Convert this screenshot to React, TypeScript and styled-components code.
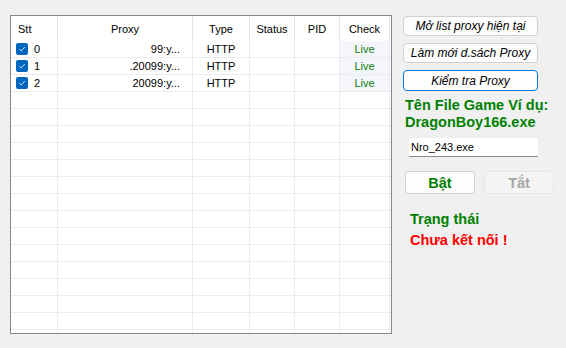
import styled, { createGlobalStyle } from "styled-components";

const GlobalStyle = createGlobalStyle`
    html, body {
        margin: 0;
        padding: 0;
        background: #f0f0f0;
        font-family: "Liberation Sans", Arial, sans-serif;
    }
`;

const Window = styled.div`
    width: 566px;
    height: 348px;
    display: flex;
    align-items: flex-start;
    background: #f0f0f0;
    overflow: hidden;
`;

const Grid = styled.div`
    margin: 15px 0 0 10px;
    width: 382px;
    height: 319px;
    box-sizing: border-box;
    border: 1px solid #828790;
    background: #ffffff;
    overflow: hidden;
    font-size: 11px;
    color: #000;
`;

const cols = "47px 135px 57px 45px 45px 50px";

const HeaderRow = styled.div`
    display: grid;
    grid-template-columns: ${cols};
    height: 25px;
`;

const HeaderCell = styled.div<{ $align?: string }>`
    display: flex;
    align-items: center;
    justify-content: ${(p) => p.$align || "center"};
    padding-left: ${(p) => (p.$align === "flex-start" ? "7px" : "0")};
    border-right: 1px solid #e5e5e5;
`;

const Row = styled.div`
    display: grid;
    grid-template-columns: ${cols};
    height: 17px;
    box-sizing: border-box;
    border-bottom: 1px solid #ececec;
`;

const Cell = styled.div<{ $align?: string; $tint?: boolean }>`
    display: flex;
    align-items: center;
    justify-content: ${(p) => p.$align || "center"};
    border-right: 1px solid #ececec;
    background: ${(p) => (p.$tint ? "#f4f6fb" : "#fff")};
    white-space: nowrap;
`;

const SttCell = styled(Cell)`
    justify-content: flex-start;
    padding-left: 5px;
    gap: 6px;
`;

const Box = styled.span`
    width: 12px;
    height: 12px;
    border-radius: 2px;
    background: #0067c0;
    display: flex;
    align-items: center;
    justify-content: center;
`;

const ProxyCell = styled(Cell)`
    justify-content: flex-end;
    padding-right: 12px;
`;

const Live = styled.span`
    color: #0b7d0b;
`;

const Panel = styled.div`
    margin: 16px 0 0 11px;
    width: 152px;
    display: flex;
    flex-direction: column;
`;

const ActionButton = styled.button<{ $focus?: boolean }>`
    width: 135px;
    height: ${(p) => (p.$focus ? "21px" : "20px")};
    margin-bottom: 7px;
    padding: 0;
    border: 1px solid ${(p) => (p.$focus ? "#0078d4" : "#d0d0d0")};
    border-radius: 4px;
    background: #fdfdfd;
    font-family: "Liberation Sans", Arial, sans-serif;
    font-size: 12px;
    font-style: italic;
    color: #000;
`;

const Label = styled.div<{ $color?: string; $indent?: number }>`
    font-size: 14.5px;
    font-weight: bold;
    line-height: 17px;
    color: ${(p) => p.$color || "#008000"};
    padding-left: ${(p) => p.$indent || 0}px;
`;

const Hint = styled(Label)`
    margin-top: -1px;
`;

const FileInput = styled.input`
    margin: 7px 0 0 6px;
    width: 129px;
    height: 19px;
    box-sizing: border-box;
    border: none;
    border-bottom: 1px solid #8c8c8c;
    padding: 0 2px;
    background: #fff;
    font-family: "Liberation Sans", Arial, sans-serif;
    font-size: 11px;
    color: #000;
    outline: none;
`;

const ToggleRow = styled.div`
    display: flex;
    gap: 9px;
    margin: 14px 0 0 2px;
`;

const Toggle = styled.button<{ $off?: boolean }>`
    width: 70px;
    height: 23px;
    padding: 0;
    border: 1px solid ${(p) => (p.$off ? "#e6e6e6" : "#d0d0d0")};
    border-radius: 4px;
    background: ${(p) => (p.$off ? "#f4f4f4" : "#fdfdfd")};
    font-family: "Liberation Sans", Arial, sans-serif;
    font-size: 14.5px;
    font-weight: bold;
    color: ${(p) => (p.$off ? "#a6a6a6" : "#008000")};
`;

const Status = styled.div`
    margin-top: 17px;
    display: flex;
    flex-direction: column;
    gap: 4px;
`;

const rows = [
    { id: "0", proxy: "99:y..." },
    { id: "1", proxy: ".20099:y..." },
    { id: "2", proxy: "20099:y..." },
];

const Check = () => (
    <Box>
        <svg width="8" height="8" viewBox="0 0 8 8">
            <path d="M1.3 4.2 L3.2 6 L6.8 2" fill="none" stroke="#cfe3f6" strokeWidth="1" />
        </svg>
    </Box>
);

const App = () => {
    const empty = Array.from({ length: 15 });
    return (
        <Window>
            <GlobalStyle />
            <Grid>
                <HeaderRow>
                    <HeaderCell $align="flex-start">Stt</HeaderCell>
                    <HeaderCell>Proxy</HeaderCell>
                    <HeaderCell>Type</HeaderCell>
                    <HeaderCell>Status</HeaderCell>
                    <HeaderCell>PID</HeaderCell>
                    <HeaderCell>Check</HeaderCell>
                </HeaderRow>
                {rows.map((r) => (
                    <Row key={r.id}>
                        <SttCell>
                            <Check />
                            {r.id}
                        </SttCell>
                        <ProxyCell>{r.proxy}</ProxyCell>
                        <Cell>HTTP</Cell>
                        <Cell />
                        <Cell />
                        <Cell $tint>
                            <Live>Live</Live>
                        </Cell>
                    </Row>
                ))}
                {empty.map((_, i) => (
                    <Row key={"e" + i}>
                        <Cell />
                        <Cell />
                        <Cell />
                        <Cell />
                        <Cell />
                        <Cell />
                    </Row>
                ))}
            </Grid>
            <Panel>
                <ActionButton>Mở list proxy hiện tại</ActionButton>
                <ActionButton>Làm mới d.sách Proxy</ActionButton>
                <ActionButton $focus>Kiểm tra Proxy</ActionButton>
                <Hint $indent={2}>
                    Tên File Game Ví dụ:
                    <br />
                    DragonBoy166.exe
                </Hint>
                <FileInput defaultValue="Nro_243.exe" />
                <ToggleRow>
                    <Toggle>Bật</Toggle>
                    <Toggle $off disabled>Tắt</Toggle>
                </ToggleRow>
                <Status>
                    <Label $indent={7}>Trạng thái</Label>
                    <Label $indent={7} $color="#ff0000">Chưa kết nối !</Label>
                </Status>
            </Panel>
        </Window>
    );
};

export default App;
